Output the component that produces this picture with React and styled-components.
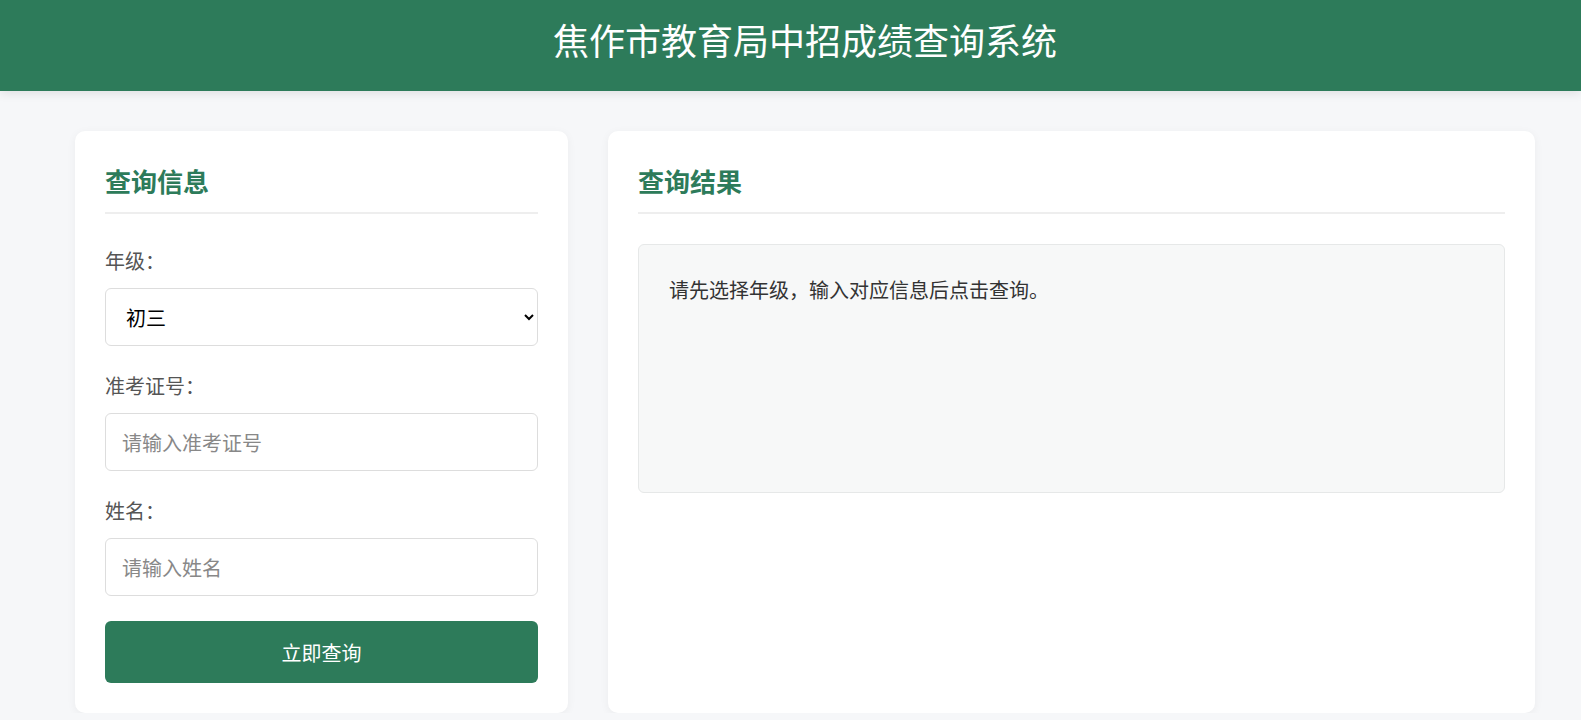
import React from "react";
import styled, { createGlobalStyle } from "styled-components";

const GREEN = "#2d7b5a";

const Global = createGlobalStyle`
  * { box-sizing: border-box; }
  html, body { margin: 0; padding: 0; }
  body {
    background: #f6f7f9;
    font-family: "Noto Sans CJK SC", "Noto Sans", sans-serif;
    color: #333;
  }
`;

const Header = styled.header`
  background: ${GREEN};
  height: 91px;
  padding: 18px 0 0 29px;
  box-shadow: 0 2px 10px rgba(0, 0, 0, 0.1);
  position: relative;
  z-index: 1;
`;

const Title = styled.h1`
  margin: 0;
  text-align: center;
  color: #fff;
  font-size: 36px;
  font-weight: 400;
  line-height: 43px;
`;

const Main = styled.main`
  display: grid;
  grid-template-columns: 493px 1fr;
  gap: 40px;
  padding: 40px 46px 0 75px;
`;

const Card = styled.section`
  background: #fff;
  border-radius: 10px;
  padding: 30px;
  box-shadow: 0 2px 10px rgba(0, 0, 0, 0.05);
`;

const CardTitle = styled.h2`
  margin: 0 0 30px;
  padding-bottom: 12px;
  border-bottom: 2px solid #eee;
  color: ${GREEN};
  font-size: 26px;
  font-weight: 700;
  line-height: 39px;
`;

const Form = styled.form`
  display: flex;
  flex-direction: column;
  padding-top: 2px;
`;

const Group = styled.div`
  display: flex;
  flex-direction: column;
  margin-bottom: 25px;
`;

const Label = styled.label`
  font-size: 20px;
  line-height: 30px;
  color: #555;
  margin-bottom: 12px;
`;

const fieldCss = `
  width: 100%;
  height: 58px;
  border: 1px solid #ddd;
  border-radius: 6px;
  background: #fff;
  font-family: "Noto Sans CJK SC", "Noto Sans", sans-serif;
  font-size: 20px;
  padding: 0 16px;
  outline: none;
`;

const Select = styled.select`
  ${fieldCss}
  color: #000;
`;

const Input = styled.input`
  ${fieldCss}
  color: #333;
  &::placeholder { color: #888; }
`;

const Button = styled.button`
  width: 100%;
  height: 62px;
  border: none;
  border-radius: 6px;
  background: ${GREEN};
  color: #fff;
  font-family: "Noto Sans CJK SC", "Noto Sans", sans-serif;
  font-size: 20px;
  cursor: pointer;
`;

const ResultBox = styled.div`
  min-height: 249px;
  background: #f7f8f8;
  border: 1px solid #e6e8e8;
  border-radius: 6px;
  padding: 30px;
`;

const ResultText = styled.p`
  margin: 0;
  font-size: 20px;
  line-height: 30px;
  color: #333;
`;

export default function App() {
  return (
    <>
      <Global />
      <Header>
        <Title>焦作市教育局中招成绩查询系统</Title>
      </Header>
      <Main>
        <Card>
          <CardTitle>查询信息</CardTitle>
          <Form onSubmit={(e) => e.preventDefault()}>
            <Group>
              <Label>年级：</Label>
              <Select defaultValue="初三">
                <option>初一</option>
                <option>初二</option>
                <option>初三</option>
              </Select>
            </Group>
            <Group>
              <Label>准考证号：</Label>
              <Input placeholder="请输入准考证号" />
            </Group>
            <Group>
              <Label>姓名：</Label>
              <Input placeholder="请输入姓名" />
            </Group>
            <Button type="submit">立即查询</Button>
          </Form>
        </Card>
        <Card>
          <CardTitle>查询结果</CardTitle>
          <ResultBox>
            <ResultText>请先选择年级，输入对应信息后点击查询。</ResultText>
          </ResultBox>
        </Card>
      </Main>
    </>
  );
}
